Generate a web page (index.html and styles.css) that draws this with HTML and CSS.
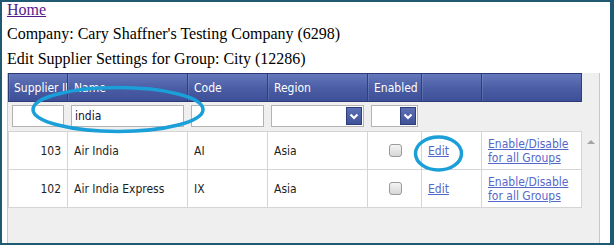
FILE: index.html
```html
<!DOCTYPE html>
<html>
<head>
<meta charset="utf-8">
<link rel="stylesheet" href="styles.css">
</head>
<body>
<div class="page">
  <a class="home" href="#">Home</a>
  <div class="line l1">Company: Cary Shaffner's Testing Company (6298)</div>
  <div class="line l2">Edit Supplier Settings for Group: City (12286)</div>
  <div class="grid">
    <div class="row head">
      <div class="cell c1">Supplier ID</div>
      <div class="cell">Name</div>
      <div class="cell">Code</div>
      <div class="cell">Region</div>
      <div class="cell">Enabled</div>
      <div class="cell"></div>
      <div class="cell"></div>
    </div>
    <div class="row filter">
      <div class="fcell"><div class="input"></div></div>
      <div class="fcell"><div class="input">india</div></div>
      <div class="fcell"><div class="input"></div></div>
      <div class="fcell"><div class="select"><span class="btn"><svg width="10" height="7" viewBox="0 0 10 7"><path d="M1.5 1.5 L5 5 L8.5 1.5" fill="none" stroke="#fff" stroke-width="2.2"/></svg></span></div></div>
      <div class="fcell"><div class="select"><span class="btn"><svg width="10" height="7" viewBox="0 0 10 7"><path d="M1.5 1.5 L5 5 L8.5 1.5" fill="none" stroke="#fff" stroke-width="2.2"/></svg></span></div></div>
      <div class="fcell"></div>
      <div class="fcell"></div>
    </div>
    <div class="body">
      <div class="rows">
        <div class="row data first">
          <div class="cell num">103</div>
          <div class="cell">Air India</div>
          <div class="cell">AI</div>
          <div class="cell">Asia</div>
          <div class="cell center"><span class="check"></span></div>
          <div class="cell"><a class="lnk" href="#">Edit</a></div>
          <div class="cell"><a class="lnk two" href="#">Enable/Disable for all Groups</a></div>
        </div>
        <div class="row data">
          <div class="cell num">102</div>
          <div class="cell">Air India Express</div>
          <div class="cell">IX</div>
          <div class="cell">Asia</div>
          <div class="cell center"><span class="check"></span></div>
          <div class="cell"><a class="lnk" href="#">Edit</a></div>
          <div class="cell"><a class="lnk two" href="#">Enable/Disable for all Groups</a></div>
        </div>
      </div>
      <div class="scrollbar"><span class="arrow-up"></span></div>
    </div>
  </div>
</div>
<svg class="annot" width="614" height="245" viewBox="0 0 614 245">
  <ellipse cx="118" cy="109.5" rx="85" ry="22" fill="none" stroke="#1a9fd8" stroke-width="3.5"/>
  <ellipse cx="438.5" cy="153.5" rx="23" ry="16.5" fill="none" stroke="#1a9fd8" stroke-width="3.5"/>
</svg>
<div class="frame"></div>
</body>
</html>
```

FILE: styles.css
```css
html, body {
  margin: 0;
  padding: 0;
}
body {
  width: 614px;
  height: 245px;
  overflow: hidden;
  background: #fff;
  font-family: "Liberation Serif", "Times New Roman", serif;
  font-size: 16px;
  color: #000;
}
.page {
  padding-left: 7px;
}
.home, .line {
  display: block;
  line-height: 20px;
}
.home {
  width: max-content;
  color: #551a8b;
  margin-bottom: 4px;
}
.l1 { margin-bottom: 5px; }
.l2 { margin-bottom: 4px; }

.grid {
  width: 591px;
  height: 172px;
  overflow: hidden;
  border-left: 1px solid #c8c8c8;
  border-right: 1px solid #c8c8c8;
  background: #efefef;
  font-family: "DejaVu Sans Condensed", "DejaVu Sans", sans-serif;
  font-stretch: condensed;
  font-size: 12px;
  color: #1e1e1e;
}
.row {
  display: grid;
  grid-template-columns: 59px 120px 80px 100px 54px 60px 100px;
  width: 574px;
  box-sizing: border-box;
}
.head {
  height: 29px;
  border: 1px solid #2c3a78;
  border-right: none;
  background: linear-gradient(#6478bd, #4a5ca3 55%, #3d4f96);
  color: #fff;
}
.head .cell {
  border-right: 1px solid #2f3e80;
  box-shadow: inset 1px 0 0 rgba(255,255,255,0.12);
  padding-left: 6px;
  display: flex;
  align-items: center;
  white-space: nowrap;
  overflow: hidden;
}
.head .c1 { padding-left: 5px; }

.filter {
  height: 29px;
  padding-left: 1px;
}
.fcell {
  padding: 3px 4px 4px 3px;
}
.input {
  height: 22px;
  box-sizing: border-box;
  border: 1px solid #b3b3b3;
  background: #fff;
  padding-left: 3px;
  line-height: 20px;
  color: #111133;
}
.select {
  height: 22px;
  box-sizing: border-box;
  border: 1px solid #b3b3b3;
  background: #fff;
  display: flex;
  justify-content: flex-end;
  padding: 1px;
}
.btn {
  width: 16px;
  height: 18px;
  box-sizing: border-box;
  border: 1px solid #2e3d7c;
  background: linear-gradient(#5d70b6, #3f5197);
  display: flex;
  align-items: center;
  justify-content: center;
}

.body {
  display: flex;
}
.rows {
  width: 574px;
}
.data {
  height: 38px;
  background: #fff;
  border-left: 1px solid #d4d4d4;
  border-bottom: 1px solid #d4d4d4;
}
.data.first {
  height: 39px;
  border-top: 1px solid #d4d4d4;
}
.data .cell {
  border-right: 1px solid #d4d4d4;
  padding-left: 6px;
  display: flex;
  align-items: center;
  white-space: nowrap;
}
.data .num {
  justify-content: flex-end;
  padding-right: 6px;
}
.data .center {
  justify-content: center;
  padding-left: 1px;
}
.check {
  width: 13px;
  height: 13px;
  box-sizing: border-box;
  border: 1px solid #9a9a9a;
  border-radius: 3px;
  background: linear-gradient(#f4f4f4, #d6d6d6);
}
.lnk {
  color: #5468cc;
  text-decoration: underline;
}
.lnk.two {
  white-space: normal;
  line-height: 14px;
  width: 84px;
}
.scrollbar {
  width: 17px;
  display: flex;
  justify-content: center;
  padding-top: 9px;
  height: 60px;
}
.arrow-up {
  width: 0;
  height: 0;
  border-left: 4px solid transparent;
  border-right: 4px solid transparent;
  border-bottom: 4px solid #a4a4a4;
}

.annot {
  position: fixed;
  top: 0;
  left: 0;
  pointer-events: none;
}
.frame {
  position: fixed;
  top: 0;
  left: 0;
  width: 614px;
  height: 245px;
  box-sizing: border-box;
  border: 2px solid #205a72;
  border-right-width: 4px;
  pointer-events: none;
}
```
